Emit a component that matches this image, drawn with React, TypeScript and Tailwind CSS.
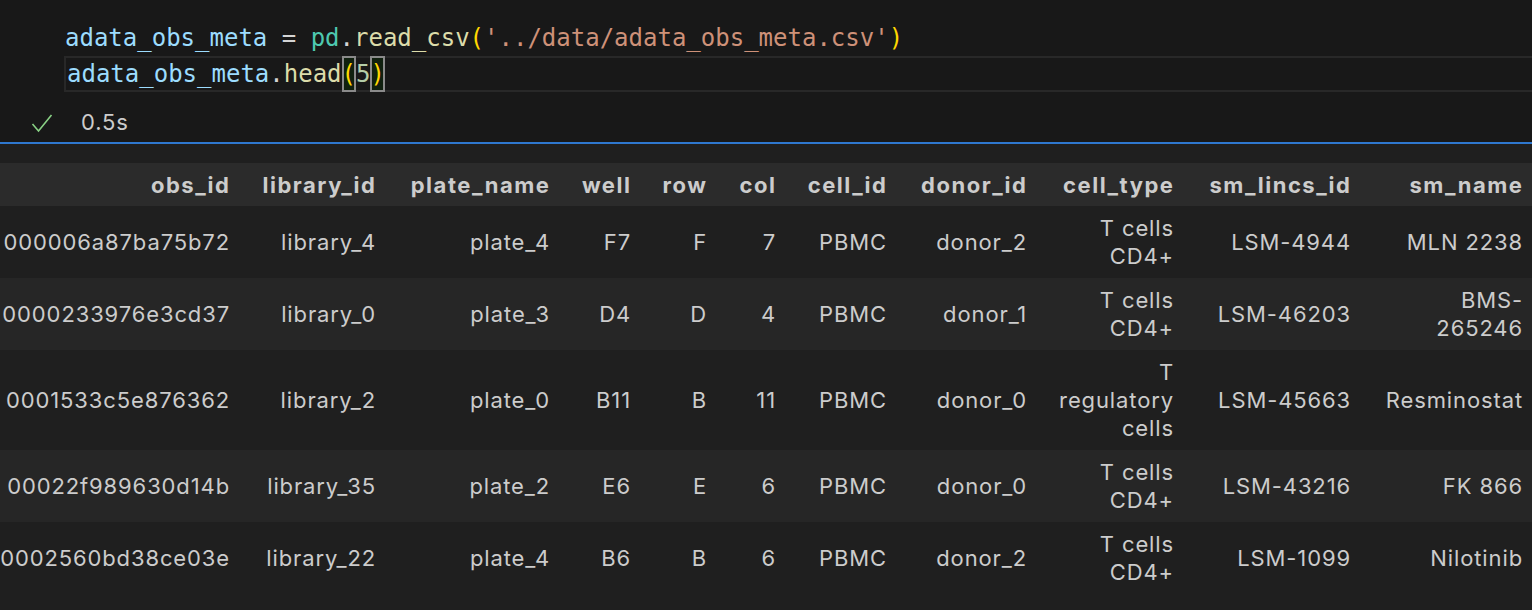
const cols = [
  { key: "obs_id", w: "w-[300px]" },
  { key: "library_id", w: "w-[146px]" },
  { key: "plate_name", w: "w-[174px]" },
  { key: "well", w: "w-[81px]" },
  { key: "row", w: "w-[76px]" },
  { key: "col", w: "w-[69px]" },
  { key: "cell_id", w: "w-[111px]" },
  { key: "donor_id", w: "w-[140px]" },
  { key: "cell_type", w: "w-[147px]" },
  { key: "sm_lincs_id", w: "w-[177px]" },
  { key: "sm_name", w: "w-[172px]" },
];

const rows: string[][][] = [
  [["000006a87ba75b72"], ["library_4"], ["plate_4"], ["F7"], ["F"], ["7"], ["PBMC"], ["donor_2"], ["T cells", "CD4+"], ["LSM-4944"], ["MLN 2238"]],
  [["0000233976e3cd37"], ["library_0"], ["plate_3"], ["D4"], ["D"], ["4"], ["PBMC"], ["donor_1"], ["T cells", "CD4+"], ["LSM-46203"], ["BMS-", "265246"]],
  [["0001533c5e876362"], ["library_2"], ["plate_0"], ["B11"], ["B"], ["11"], ["PBMC"], ["donor_0"], ["T", "regulatory", "cells"], ["LSM-45663"], ["Resminostat"]],
  [["00022f989630d14b"], ["library_35"], ["plate_2"], ["E6"], ["E"], ["6"], ["PBMC"], ["donor_0"], ["T cells", "CD4+"], ["LSM-43216"], ["FK 866"]],
  [["0002560bd38ce03e"], ["library_22"], ["plate_4"], ["B6"], ["B"], ["6"], ["PBMC"], ["donor_2"], ["T cells", "CD4+"], ["LSM-1099"], ["Nilotinib"]],
];

function Bracket({ ch }: { ch: string }) {
  return (
    <span className="outline-2 -outline-offset-2 outline-[#8a8a8a] bg-[#10200f] text-[#ffd700]">{ch}</span>
  );
}

export default function App() {
  return (
    <div className="w-[1532px] h-[610px] overflow-hidden bg-[#1f1f1f] text-[#cccccc]">
      <div className="bg-[#181818] h-[142px] flex flex-col">
        <div className="pt-5 font-['DejaVu_Sans_Mono',monospace] text-[24px] leading-[36px]">
          <div className="pl-[65px] whitespace-pre">
            <span className="text-[#9cdcfe]">adata_obs_meta</span>
            <span className="text-[#d4d4d4]"> = </span>
            <span className="text-[#4ec9b0]">pd</span>
            <span className="text-[#d4d4d4]">.</span>
            <span className="text-[#dcdcaa]">read_csv</span>
            <span className="text-[#ffd700]">(</span>
            <span className="text-[#ce9178]">'../data/adata_obs_meta.csv'</span>
            <span className="text-[#ffd700]">)</span>
          </div>
          <div className="ml-[64px] pl-px border-y-2 border-l-2 border-[#282828] h-[36px] flex items-center whitespace-pre">
            <span className="text-[#9cdcfe]">adata_obs_meta</span>
            <span className="text-[#d4d4d4]">.</span>
            <span className="text-[#dcdcaa]">head</span>
            <Bracket ch="(" />
            <span className="text-[#b5cea8]">5</span>
            <Bracket ch=")" />
          </div>
        </div>
        <div className="flex items-center mt-[14px] font-['Inter',sans-serif] text-[22px] tracking-[0.04em]">
          <svg className="ml-[31px] w-[22px] h-[20px]" viewBox="0 0 22 20" fill="none">
            <path d="M1.5 11 L7.5 18 L20.5 2" stroke="#89d185" strokeWidth="1.6" />
          </svg>
          <span className="ml-[28px] text-[#cccccc]">0.5s</span>
        </div>
      </div>
      <div className="h-[2px] bg-[#2f78cf]" />
      <div className="pt-[19px] overflow-hidden font-['Inter',sans-serif] text-[22px] leading-[28px]">
        <table className="table-fixed border-collapse ml-[-55px] w-[1593px]">
          <colgroup>
            {cols.map((c) => (
              <col key={c.key} className={c.w} />
            ))}
          </colgroup>
          <thead>
            <tr className="bg-[#2b2b2b]">
              {cols.map((c) => (
                <th key={c.key} className="pl-2 pr-[14.5px] py-[7.5px] text-right font-bold tracking-[0.07em] whitespace-nowrap text-[#cccccc]">
                  {c.key}
                </th>
              ))}
            </tr>
          </thead>
          <tbody>
            {rows.map((r, i) => (
              <tr key={i} className={i % 2 === 1 ? "bg-[#262626]" : "bg-[#1f1f1f]"}>
                {r.map((lines, j) => (
                  <td key={j} className="pl-2 pr-[15px] py-2 text-right align-middle tracking-[0.04em] whitespace-nowrap overflow-hidden">
                    {lines.map((l, k) => (
                      <div key={k}>{l}</div>
                    ))}
                  </td>
                ))}
              </tr>
            ))}
          </tbody>
        </table>
      </div>
    </div>
  );
}
